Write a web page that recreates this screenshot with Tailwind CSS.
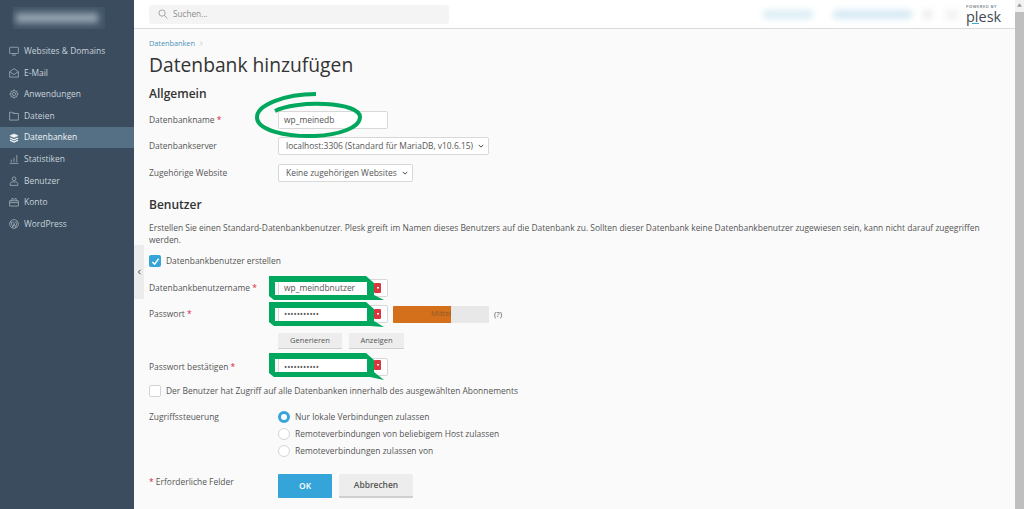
<!DOCTYPE html>
<html lang="de">
<head>
<meta charset="UTF-8">
<title>Datenbank hinzufügen</title>
<script src="https://cdn.jsdelivr.net/npm/@tailwindcss/browser@4"></script>
</head>
<body class="font-['Open_Sans',sans-serif] text-[8.45px] text-[#555] overflow-hidden">
<div class="relative flex w-[1024px] h-[509px] overflow-hidden bg-[#fafafa]">

  <!-- Sidebar -->
  <aside class="w-[134px] h-full shrink-0 bg-[#3a4c5e] text-[#c9d3db]">
    <div class="h-[40.5px] pt-[7px] pl-[13px]">
      <div class="w-[92px] h-[22px] bg-[#425568] flex items-center pl-[3px]">
        <div class="w-[82px] h-[10px] bg-[#94a2ae] blur-[3px]"></div>
      </div>
    </div>
    <nav class="flex flex-col">
      <a class="flex items-center gap-[5px] h-[21.6px] pl-[9px]"><svg class="w-[10px] h-[10px] text-[#aab6c0]" viewBox="0 0 16 16" fill="none" stroke="currentColor" stroke-width="1.2"><rect x="1" y="2" width="14" height="10" rx="1"/><path d="M5 14.5h6"/></svg>Websites &amp; Domains</a>
      <a class="flex items-center gap-[5px] h-[21.6px] pl-[9px]"><svg class="w-[10px] h-[10px] text-[#aab6c0]" viewBox="0 0 16 16" fill="none" stroke="currentColor" stroke-width="1.2"><path d="M1 6l7-5 7 5v8.5H1z"/><path d="M1 6l7 4.5L15 6"/></svg>E-Mail</a>
      <a class="flex items-center gap-[5px] h-[21.6px] pl-[9px]"><svg class="w-[10px] h-[10px] text-[#aab6c0]" viewBox="0 0 16 16" fill="none" stroke="currentColor" stroke-width="1.2"><circle cx="8" cy="8" r="2.5"/><circle cx="8" cy="8" r="5.5"/><path d="M8 .5v2M8 13.5v2M.5 8h2M13.5 8h2M2.7 2.7l1.4 1.4M11.9 11.9l1.4 1.4M2.7 13.3l1.4-1.4M11.9 4.1l1.4-1.4"/></svg>Anwendungen</a>
      <a class="flex items-center gap-[5px] h-[21.6px] pl-[9px]"><svg class="w-[10px] h-[10px] text-[#aab6c0]" viewBox="0 0 16 16" fill="none" stroke="currentColor" stroke-width="1.2"><path d="M1 2v12.5h14V4H6.5L5.5 2zM8 4V2"/></svg>Dateien</a>
      <a class="flex items-center gap-[5px] h-[21.6px] pl-[9px] bg-[#557085] text-[#f0f4f7]"><svg class="w-[10px] h-[10px]" viewBox="0 0 16 16" fill="none" stroke="currentColor" stroke-width="2"><path d="M8 1.5l6.5 2.7L8 7 1.5 4.2z" fill="currentColor" stroke-width="1"/><path d="M1.5 8L8 10.8 14.5 8M1.5 11.5L8 14.5l6.5-3"/></svg>Datenbanken</a>
      <a class="flex items-center gap-[5px] h-[21.6px] pl-[9px]"><svg class="w-[10px] h-[10px] text-[#aab6c0]" viewBox="0 0 16 16" fill="none" stroke="currentColor" stroke-width="1.2"><path d="M1 15h14M3.5 13V9M8 13V6M12.5 13V1.5"/></svg>Statistiken</a>
      <a class="flex items-center gap-[5px] h-[21.6px] pl-[9px]"><svg class="w-[10px] h-[10px] text-[#aab6c0]" viewBox="0 0 16 16" fill="none" stroke="currentColor" stroke-width="1.2"><circle cx="8" cy="4.5" r="3"/><path d="M2 15v-2.5c0-1.5 1.5-3 3-3h6c1.5 0 3 1.5 3 3V15z"/></svg>Benutzer</a>
      <a class="flex items-center gap-[5px] h-[21.6px] pl-[9px]"><svg class="w-[10px] h-[10px] text-[#aab6c0]" viewBox="0 0 16 16" fill="none" stroke="currentColor" stroke-width="1.2"><path d="M1 6h14v8.5H1zM1 9h14M4 6l1-4 3 2 3-2 1 4"/></svg>Konto</a>
      <a class="flex items-center gap-[5px] h-[21.6px] pl-[9px]"><svg class="w-[10px] h-[10px] text-[#aab6c0]" viewBox="0 0 16 16" fill="none" stroke="currentColor" stroke-width="1.2"><circle cx="8" cy="8" r="7"/><path d="M3 5l3.2 8.5L8.2 7l2.3 6.5L13 5.5M2.5 5h5M9 5h3.5"/></svg>WordPress</a>
    </nav>
  </aside>

  <div class="flex-1 min-w-0 flex flex-col">
    <!-- Header -->
    <header class="h-[29px] shrink-0 flex items-center bg-white border-b border-[#dcdcdc] relative">
      <div class="ml-[15px] w-[300px] h-[19px] rounded-[3px] bg-[#f4f4f4] flex items-center gap-[5px] pl-[9px] text-[#8d8d8d] text-[8.2px]">
        <svg class="w-[10px] h-[10px]" viewBox="0 0 16 16" fill="none" stroke="#8d8d8d" stroke-width="1.2"><circle cx="6.5" cy="6.5" r="5"/><path d="M10.5 10.5l4.5 4.5"/></svg>
        Suchen...
      </div>
      <div class="ml-[314px] w-[50px] h-[9px] rounded-sm bg-[#dcedf5] blur-[3px]"></div>
      <div class="ml-[20px] w-[79px] h-[9px] rounded-sm bg-[#d6e9f3] blur-[3px]"></div>
      <div class="ml-[11px] w-[9px] h-[9px] bg-[#ececec] blur-[3px]"></div>
      <div class="ml-[13px] w-[14px] h-[11px] bg-[#f4f4f4] blur-[3px]"></div>
      <div class="absolute left-[832px] top-[4px] w-[36px] flex flex-col items-start leading-none text-[#3f4a52]">
        <span class="text-[4px] leading-[5px] tracking-[0.55px] font-semibold whitespace-nowrap text-[#6b747b]">POWERED BY</span>
        <span class="text-[14.5px] leading-[13px] mt-[1px]">plesk</span>
        <span class="ml-[6px] w-[7px] h-[1px] bg-[#3fa9d6]"></span>
      </div>
    </header>

    <!-- Main -->
    <main class="relative flex-1 min-h-0 pl-[15px] pr-[20px]">
      <div class="h-[8px]"></div>
      <div class="flex items-center gap-[4px] h-[12px] text-[7.3px] text-[#4b94b8]">Datenbanken <svg class="w-[5px] h-[5px]" viewBox="0 0 8 8" fill="none" stroke="#9aa5ab" stroke-width="1"><path d="M2 1l3 3-3 3"/></svg></div>
      <h1 class="text-[19.25px] leading-[28px] mt-[2px] text-[#333]">Datenbank hinzufügen</h1>
      <h2 class="text-[12px] leading-[18px] mt-[6px] font-semibold text-[#333]">Allgemein</h2>

      <div class="flex items-center h-[18px] mt-[8px]">
        <label class="w-[129px]">Datenbankname <span class="text-[#d9263a]">*</span></label>
        <div class="w-[110px] h-[18px] bg-white border border-[#d8d8d8] rounded-[2px] px-[5px] flex items-center">wp_meinedb</div>
      </div>
      <div class="flex items-center h-[18px] mt-[8px]">
        <label class="w-[129px]">Datenbankserver</label>
        <div class="w-[211px] h-[18px] bg-white border border-[#d8d8d8] rounded-[2px] pl-[7px] pr-[4px] flex items-center justify-between whitespace-nowrap">localhost:3306 (Standard für MariaDB, v10.6.15)<svg class="w-[6px] h-[6px]" viewBox="0 0 8 8" fill="none" stroke="#444" stroke-width="1.3"><path d="M1 2.5l3 3 3-3"/></svg></div>
      </div>
      <div class="flex items-center h-[18px] mt-[9px]">
        <label class="w-[129px]">Zugehörige Website</label>
        <div class="w-[135px] h-[18px] bg-white border border-[#d8d8d8] rounded-[2px] pl-[7px] pr-[4px] flex items-center justify-between whitespace-nowrap">Keine zugehörigen Websites<svg class="w-[6px] h-[6px]" viewBox="0 0 8 8" fill="none" stroke="#444" stroke-width="1.3"><path d="M1 2.5l3 3 3-3"/></svg></div>
      </div>

      <h2 class="text-[12px] leading-[18px] mt-[14px] font-semibold text-[#333]">Benutzer</h2>
      <p class="leading-[12px] mt-[8px] w-[840px]">Erstellen Sie einen Standard-Datenbankbenutzer. Plesk greift im Namen dieses Benutzers auf die Datenbank zu. Sollten dieser Datenbank keine Datenbankbenutzer zugewiesen sein, kann nicht darauf zugegriffen werden.</p>

      <div class="flex items-center gap-[5px] h-[12px] mt-[9px]">
        <span class="w-[12px] h-[12px] rounded-[2px] bg-[#35a5d9] flex items-center justify-center"><svg class="w-[9px] h-[9px]" viewBox="0 0 10 10" fill="none" stroke="#fff" stroke-width="1.6"><path d="M1.5 5.5l2.5 2.5 4.5-6"/></svg></span>
        Datenbankbenutzer erstellen
      </div>

      <div class="flex items-center h-[18px] mt-[12px]">
        <label class="w-[129px]">Datenbankbenutzername <span class="text-[#d9263a]">*</span></label>
        <div class="w-[110px] h-[18px] bg-white border border-[#d8d8d8] rounded-[2px] px-[5px] flex items-center">wp_meindbnutzer</div>
      </div>
      <div class="flex items-center h-[18px] mt-[8px]">
        <label class="w-[129px]">Passwort <span class="text-[#d9263a]">*</span></label>
        <div class="w-[110px] h-[18px] bg-white border border-[#d8d8d8] rounded-[2px] px-[5px] flex items-center">•••••••••••</div>
        <div class="relative w-[96px] h-[17px] ml-[5px] bg-[#e8e8e8] rounded-[1px] overflow-hidden flex items-center">
          <div class="absolute left-0 top-0 h-full w-[58px] bg-[#d4701c]"></div>
          <span class="relative text-[7.5px] text-[#8f5a28] pl-[38px]">Mittel</span>
        </div>
        <span class="ml-[5px] text-[8px]">(?)</span>
      </div>
      <div class="flex gap-[7px] ml-[129px] mt-[10px] h-[16px]">
        <button class="w-[64px] h-[16px] bg-[#ededed] border-b border-[#cfcfcf] rounded-[1px] text-[7.6px] font-medium">Generieren</button>
        <button class="w-[55px] h-[16px] bg-[#ededed] border-b border-[#cfcfcf] rounded-[1px] text-[7.6px] font-medium">Anzeigen</button>
      </div>
      <div class="flex items-center h-[18px] mt-[9px]">
        <label class="w-[129px]">Passwort bestätigen <span class="text-[#d9263a]">*</span></label>
        <div class="w-[110px] h-[18px] bg-white border border-[#d8d8d8] rounded-[2px] px-[5px] flex items-center">•••••••••••</div>
      </div>
      <div class="flex items-center gap-[5px] h-[12px] mt-[9px]">
        <span class="w-[12px] h-[12px] rounded-[2px] bg-white border border-[#d4d4d4]"></span>
        Der Benutzer hat Zugriff auf alle Datenbanken innerhalb des ausgewählten Abonnements
      </div>

      <div class="flex mt-[14px]">
        <label class="w-[129px] leading-[12px]">Zugriffssteuerung</label>
        <div class="flex flex-col gap-[5px]">
          <div class="flex items-center gap-[5px] h-[12px]"><span class="w-[12px] h-[12px] rounded-full bg-white border-[3.5px] border-[#35a5d9]"></span>Nur lokale Verbindungen zulassen</div>
          <div class="flex items-center gap-[5px] h-[12px]"><span class="w-[12px] h-[12px] rounded-full bg-white border border-[#d4d4d4]"></span>Remoteverbindungen von beliebigem Host zulassen</div>
          <div class="flex items-center gap-[5px] h-[12px]"><span class="w-[12px] h-[12px] rounded-full bg-white border border-[#d4d4d4]"></span>Remoteverbindungen zulassen von</div>
        </div>
      </div>

      <div class="flex mt-[17px]">
        <label class="w-[129px] mt-[2px] leading-[12px]"><span class="text-[#d9263a]">*</span> Erforderliche Felder</label>
        <button class="w-[54px] h-[24px] bg-[#35a5d9] text-white font-semibold rounded-[1px]">OK</button>
        <button class="ml-[7px] w-[74px] h-[24px] bg-[#ededed] border-b-2 border-[#cfcfcf] rounded-[1px] font-semibold">Abbrechen</button>
      </div>

      <!-- Sidebar collapse handle -->
      <div class="absolute left-0 top-[216px] w-[10px] h-[54px] bg-[#ececec] flex items-center justify-center">
        <svg class="w-[5px] h-[6px]" viewBox="0 0 6 8" fill="none" stroke="#444" stroke-width="1.3"><path d="M4.5 1L1.5 4l3 3"/></svg>
      </div>
    </main>
  </div>

  <!-- Scrollbar -->
  <div class="absolute right-0 top-0 w-[9px] h-full bg-[#f2f2f2] flex flex-col items-center">
    <div class="h-[9px] w-full flex items-center justify-center"><svg class="w-[5px] h-[4px]" viewBox="0 0 6 4" fill="#9a9a9a"><path d="M3 0l3 4H0z"/></svg></div>
    <div class="w-full flex-1 bg-[#bfbfbf] mt-[3px]"></div>
  </div>

  <!-- Green marker annotations drawn over the screenshot -->
  <svg class="absolute left-0 top-0 pointer-events-none" width="1024" height="509" viewBox="0 0 1024 509" fill="none">
    <g fill="#d9363e">
      <rect x="374" y="283" width="7" height="10" rx="1"/>
      <rect x="374" y="309" width="7" height="10" rx="1"/>
      <rect x="374" y="360" width="7" height="10" rx="1"/>
    </g>
    <g fill="#fff">
      <rect x="377" y="287" width="2" height="1.5"/>
      <rect x="377" y="313" width="2" height="1.5"/>
      <rect x="377" y="364" width="2" height="1.5"/>
    </g>
    <path d="M275 111C285 106 305 103 325 104C346 105 360 110 360 117C360 128 338 135 315 136C285 137 258 130 257 118C256 105 285 94 316 94" stroke="#00a75d" stroke-width="4"/>
    <g fill="#00a75d" fill-rule="evenodd">
      <path d="M269 276H366L374 283V295L384 300L370 300H274L269 296ZM275 282V295H367V282Z"/>
      <path d="M269 302H366L374 309V321L384 327L370 326H274L269 322ZM275 308V321H367V308Z"/>
      <path d="M269 353H366L374 360V372L384 380L370 377H274L269 373ZM275 359V372H367V359Z"/>
    </g>
  </svg>
</div>
</body>
</html>
